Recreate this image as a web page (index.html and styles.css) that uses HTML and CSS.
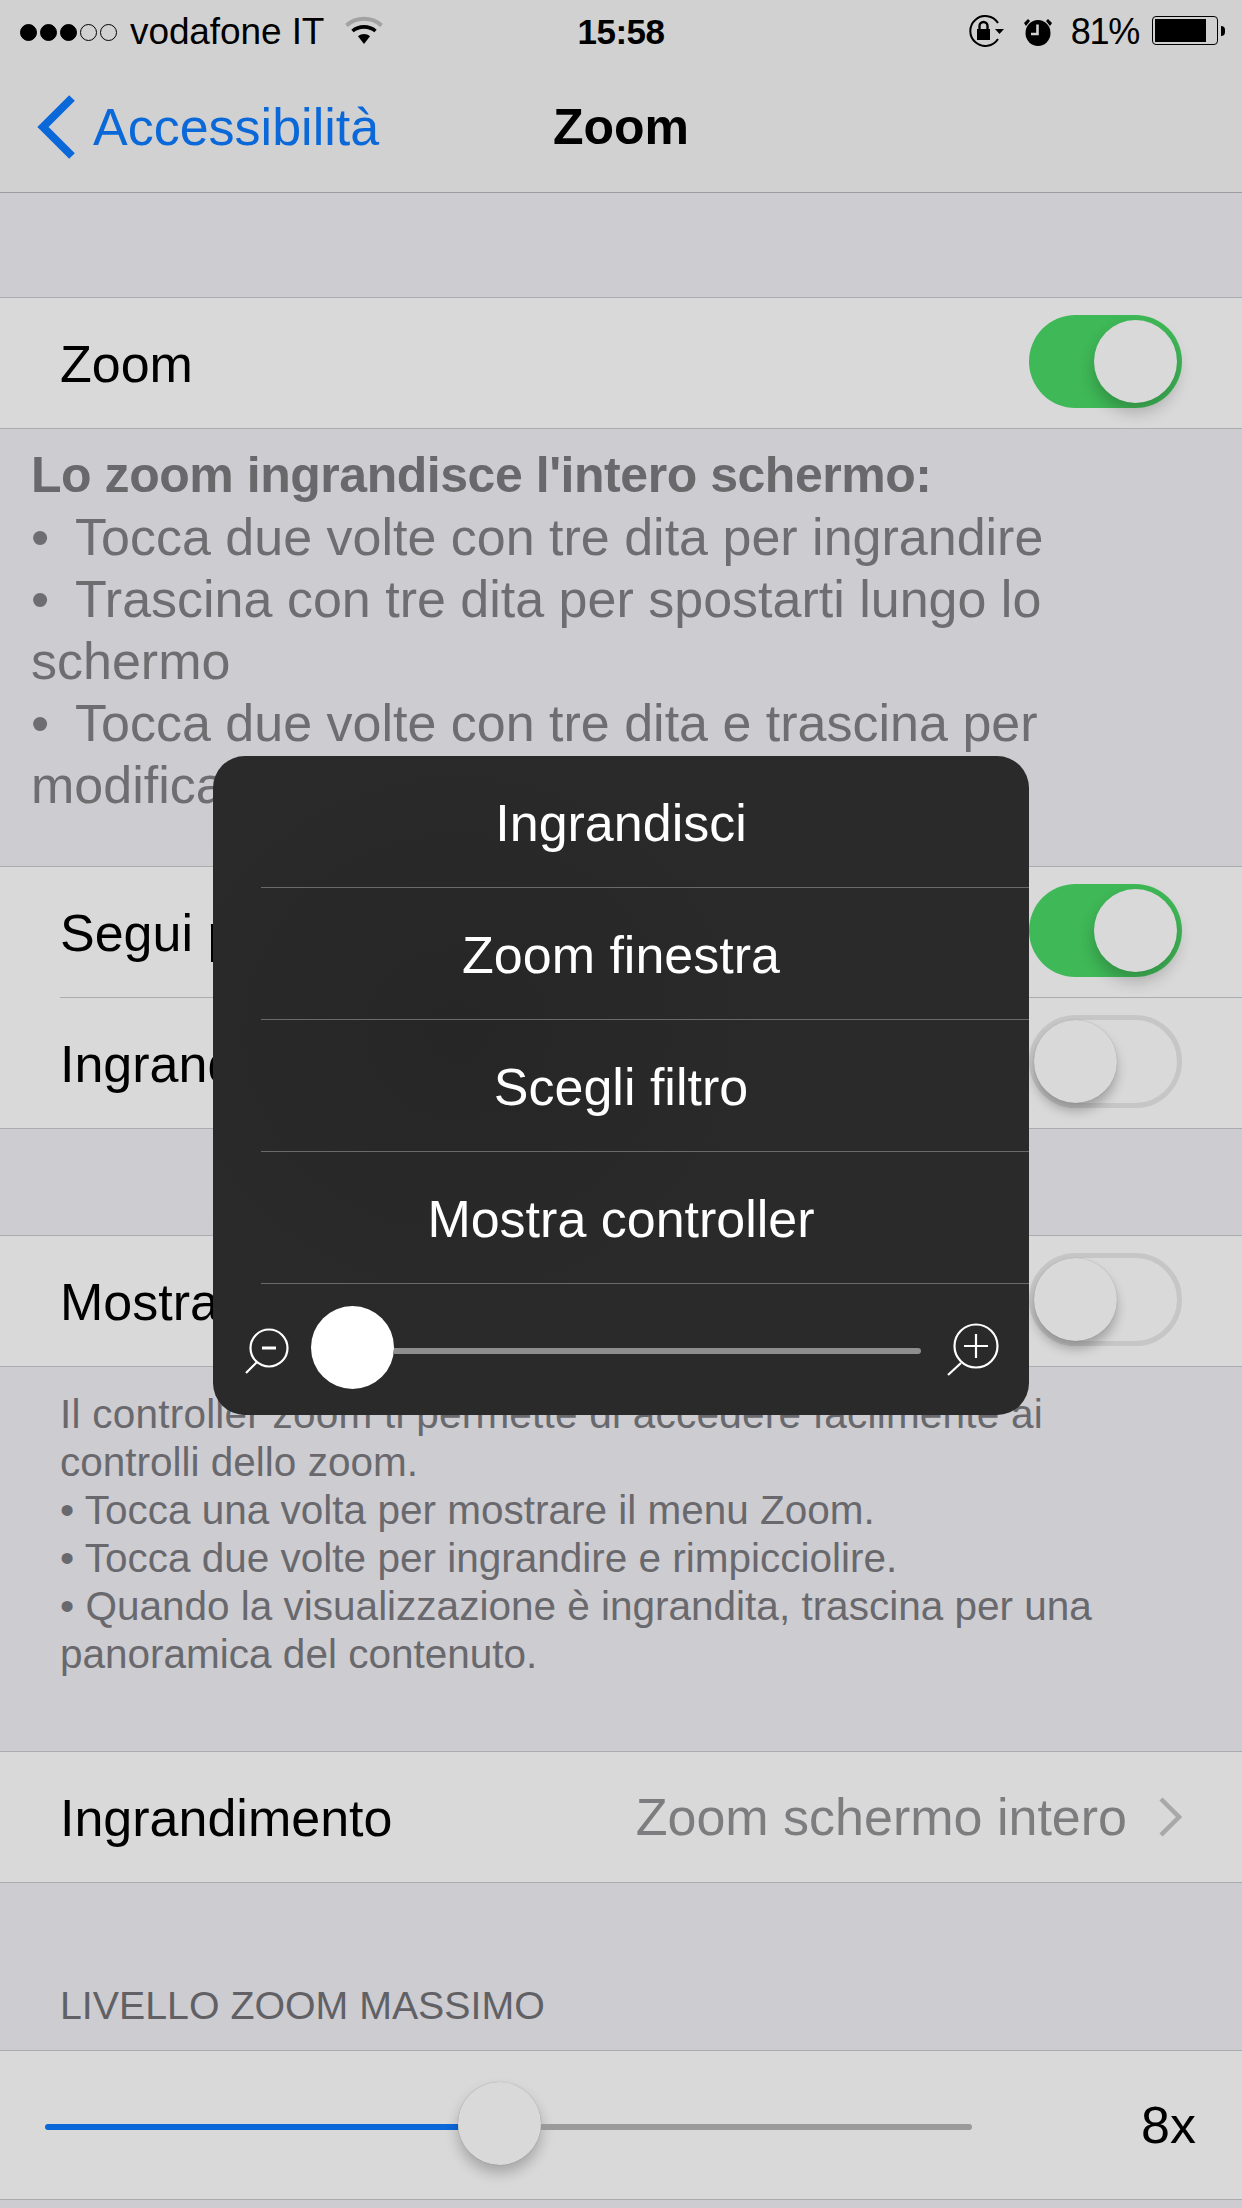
FILE: index.html
```html
<!DOCTYPE html>
<html lang="it">
<head>
<meta charset="utf-8">
<title>Zoom</title>
<link rel="stylesheet" href="styles.css">
</head>
<body>
<div class="screen">
  <header class="top">
    <div class="status">
      <div class="status-left">
        <span class="dot on"></span><span class="dot on"></span><span class="dot on"></span><span class="dot"></span><span class="dot"></span>
        <span class="carrier">vodafone IT</span>
        <svg class="wifi" width="38" height="28" viewBox="0 0 38 28"><path d="M1.500 9.500C11 .5 27 .5 36.500 9.500" fill="none" stroke="#a2a2a2" stroke-width="4"/><path d="M7.500 15C14 9.500 24 9.500 30.500 15" fill="none" stroke="#000" stroke-width="3.600"/><path d="M13 20.200C16.500 17.400 21.500 17.400 25 20.200L19 28Z" fill="#000"/></svg>
      </div>
      <div class="clock">15:58</div>
      <div class="status-right">
        <svg class="lock" width="36" height="32" viewBox="0 0 36 32"><path d="M30 8A15 15 0 1 0 30 24" fill="none" stroke="#000" stroke-width="2"/><path d="M27 14h9l-4.500 5z" fill="#000"/><rect x="9" y="14" width="13" height="11" fill="#000"/><path d="M11.500 14v-3a4 4 0 0 1 8 0V14" fill="none" stroke="#000" stroke-width="2.400"/></svg>
        <svg class="alarm" width="30" height="29" viewBox="0 0 30 29"><ellipse cx="15" cy="16" rx="12.500" ry="13" fill="#000"/><path d="M1 6l4-4 2 2-4 5zM29 6l-4-4-2 2 4 5z" fill="#000"/><path d="M14.500 7.500v9.500H8" fill="none" stroke="#d1d1d1" stroke-width="2.600"/></svg>
        <span class="pct">81%</span>
        <div class="battery"><div class="battery-body"><div class="battery-fill"></div></div><div class="battery-nub"></div></div>
      </div>
    </div>
    <nav class="nav">
      <div class="back">
        <svg class="chev" width="38" height="64" viewBox="0 0 38 64"><path d="M35 3L6 32 35 61" fill="none" stroke="#0a68d9" stroke-width="8"/></svg>
        <span>Accessibilità</span>
      </div>
      <h1 class="title">Zoom</h1>
    </nav>
  </header>

  <main class="content">
    <section class="group first">
      <div class="row"><span class="label">Zoom</span><div class="toggle is-on"><div class="thumb"></div></div></div>
    </section>
    <div class="help-large">
      <strong>Lo zoom ingrandisce l'intero schermo:</strong><br>
      <span class="bl">•</span>Tocca due volte con tre dita per ingrandire<br>
      <span class="bl">•</span>Trascina con tre dita per spostarti lungo lo<br>
      schermo<br>
      <span class="bl">•</span>Tocca due volte con tre dita e trascina per<br>
      modificare lo zoom
    </div>
    <section class="group">
      <div class="row"><span class="label">Segui punto</span><div class="toggle is-on"><div class="thumb"></div></div></div>
      <div class="sep"></div>
      <div class="row"><span class="label">Ingrandimento</span><div class="toggle"><div class="thumb"></div></div></div>
    </section>
    <section class="group spaced">
      <div class="row"><span class="label">Mostra controller</span><div class="toggle"><div class="thumb"></div></div></div>
    </section>
    <div class="help-small">
      <span class="line-wide">Il controller zoom ti permette di accedere facilmente ai</span><br>
      controlli dello zoom.<br>
      • Tocca una volta per mostrare il menu Zoom.<br>
      • Tocca due volte per ingrandire e rimpicciolire.<br>
      • Quando la visualizzazione è ingrandita, trascina per una<br>
      panoramica del contenuto.
    </div>
    <section class="group">
      <div class="row"><span class="label">Ingrandimento</span>
        <div class="value"><span>Zoom schermo intero</span>
          <svg width="24" height="40" viewBox="0 0 24 40"><path d="M3 2l18 18L3 38" fill="none" stroke="#a8a8aa" stroke-width="4.500"/></svg>
        </div>
      </div>
    </section>
    <div class="section-head">LIVELLO ZOOM MASSIMO</div>
    <section class="group">
      <div class="row slider-row">
        <div class="bar bar-blue"></div>
        <div class="knob"></div>
        <div class="bar bar-gray"></div>
        <span class="level">8x</span>
      </div>
    </section>
  </main>

  <aside class="popup">
    <div class="pop-item">Ingrandisci</div>
    <div class="pop-sep"></div>
    <div class="pop-item">Zoom finestra</div>
    <div class="pop-sep"></div>
    <div class="pop-item">Scegli filtro</div>
    <div class="pop-sep"></div>
    <div class="pop-item">Mostra controller</div>
    <div class="pop-sep"></div>
    <div class="pop-slider">
      <svg class="mag-minus" width="46" height="46" viewBox="0 0 46 46"><circle cx="25" cy="20" r="18.500" fill="none" stroke="#fff" stroke-width="2.200"/><path d="M18 20h14" stroke="#fff" stroke-width="3"/><path d="M13 34L2 45" stroke="#fff" stroke-width="2.200"/></svg>
      <div class="pop-thumb"></div>
      <div class="pop-track"></div>
      <svg class="mag-plus" width="53" height="53" viewBox="0 0 53 53"><circle cx="30" cy="23" r="21.500" fill="none" stroke="#fff" stroke-width="2.200"/><path d="M18 23h24M30 11v24" stroke="#fff" stroke-width="2.200"/><path d="M15 40L2 52" stroke="#fff" stroke-width="2.200"/></svg>
    </div>
  </aside>
</div>
</body>
</html>
```

FILE: styles.css
```css
* { box-sizing: border-box; }
html, body { margin: 0; padding: 0; }
body { font-family: "Liberation Sans", Arial, sans-serif; background: #cdccd1; color: #000; }

.screen { position: relative; width: 1242px; height: 2208px; overflow: hidden; background: #cdccd1; }

.top { background: #d1d1d1; border-bottom: 1px solid #9d9da0; height: 193px; }

.status { display: flex; align-items: center; justify-content: space-between; position: relative; height: 64px; padding: 0 17px 0 20px; font-size: 37px; }
.status-left { display: flex; align-items: center; }
.dot { width: 17px; height: 17px; border-radius: 50%; border: 1px solid #000; margin-right: 3px; }
.dot.on { background: #000; }
.carrier { margin-left: 10px; letter-spacing: -.1px; }
.wifi { margin-left: 21px; margin-top: -5px; }
.clock { position: absolute; left: 0; right: 0; text-align: center; font-weight: 700; font-size: 35px; letter-spacing: -.5px; pointer-events: none; }
.status-right { display: flex; align-items: center; }
.lock { margin: -3px 19px 0 0; }
.alarm { margin: -2px 18px 0 0; }
.pct { margin-right: 13px; font-size: 36px; letter-spacing: -1.300px; }
.battery { display: flex; align-items: center; margin-top: -3px; }
.battery-body { width: 66px; height: 29px; border: 1px solid #000; border-radius: 4px; padding: 2px; }
.battery-fill { width: 51px; height: 100%; background: #000; }
.battery-nub { width: 4px; height: 10px; margin-left: 3px; background: #000; border-radius: 0 4px 4px 0; }

.nav { display: flex; align-items: center; justify-content: center; position: relative; height: 128px; }
.back { position: absolute; left: 37px; top: 31px; display: flex; align-items: center; gap: 18px; color: #0a68d9; font-size: 52px; }
.title { margin: 0 0 2px; font-size: 50px; font-weight: 700; }

.group { background: #d9d9d9; border-top: 1px solid #abacaf; border-bottom: 1px solid #abacaf; }
.group.first { margin-top: 104px; }
.group.spaced { margin-top: 106px; }
.row { display: flex; align-items: center; justify-content: space-between; height: 130px; padding: 0 60px; font-size: 52px; }
.label { padding-top: 2px; }
.sep { height: 1px; margin-left: 60px; background: #abacaf; }

.toggle { display: flex; flex: none; align-items: center; width: 153px; height: 93px; margin-bottom: 3px; border-radius: 47px; border: 5px solid #c6c6c6; background: #d9d9d9; }
.thumb { width: 83px; height: 83px; border-radius: 50%; background: #d9d9d9; box-shadow: 0 8px 11px rgba(0, 0, 0, .25), 0 0 1px rgba(0, 0, 0, .25); }
.toggle.is-on { border: none; background: #3fb857; justify-content: flex-end; padding-right: 5px; }
.toggle.is-on .thumb { box-shadow: 0 9px 16px rgba(0, 0, 0, .22); }

.help-large { height: 437px; padding: 14px 0 0 31px; font-size: 52px; line-height: 62px; color: #6e6e70; }
.help-large strong { color: #69696b; font-size: 50px; letter-spacing: -.46px; }
.bl { display: inline-block; width: 44px; }

.help-small { height: 384px; padding: 23px 0 0 60px; font-size: 40.500px; line-height: 48px; color: #69696d; }
.line-wide { letter-spacing: .23px; }

.value { display: flex; align-items: center; gap: 31px; color: #7d7d7f; }

.section-head { height: 167px; padding: 99px 0 0 60px; font-size: 39.300px; line-height: 46px; color: #616165; }

.slider-row { justify-content: flex-start; height: 148px; padding: 0 46px 0 45px; }
.bar { height: 6px; margin-top: 3px; border-radius: 3px; }
.bar-blue { width: 413px; background: #0a68d9; border-radius: 3px 0 0 3px; }
.bar-gray { width: 431px; background: #9a9a9a; border-radius: 0 3px 3px 0; }
.knob { flex: none; width: 83px; height: 83px; margin-bottom: 3px; border-radius: 50%; background: #d9d9d9; box-shadow: 0 8px 14px rgba(0, 0, 0, .24), 0 0 1px rgba(0, 0, 0, .3); }
.level { margin-left: auto; }

.popup { position: absolute; left: 213px; top: 756px; width: 816px; height: 659px; border-radius: 32px; background: radial-gradient(ellipse 320px 300px at 30% 42%, #262627, #2a2a2b); color: #fff; }
.pop-item { height: 131px; display: flex; align-items: center; justify-content: center; padding-top: 3px; font-size: 52px; }
.pop-sep { height: 1px; margin-left: 48px; background: #6a6a6b; }
.pop-slider { display: flex; align-items: center; height: 131px; padding-left: 31px; }
.mag-minus { flex: none; margin-top: 2px; }
.pop-thumb { flex: none; width: 83px; height: 83px; margin: 0 0 4px 21px; border-radius: 50%; background: #fff; }
.pop-track { flex: none; width: 527px; height: 6px; margin-top: 3px; border-radius: 0 3px 3px 0; background: #8e8e8f; }
.mag-plus { flex: none; margin-left: 25px; }
```
